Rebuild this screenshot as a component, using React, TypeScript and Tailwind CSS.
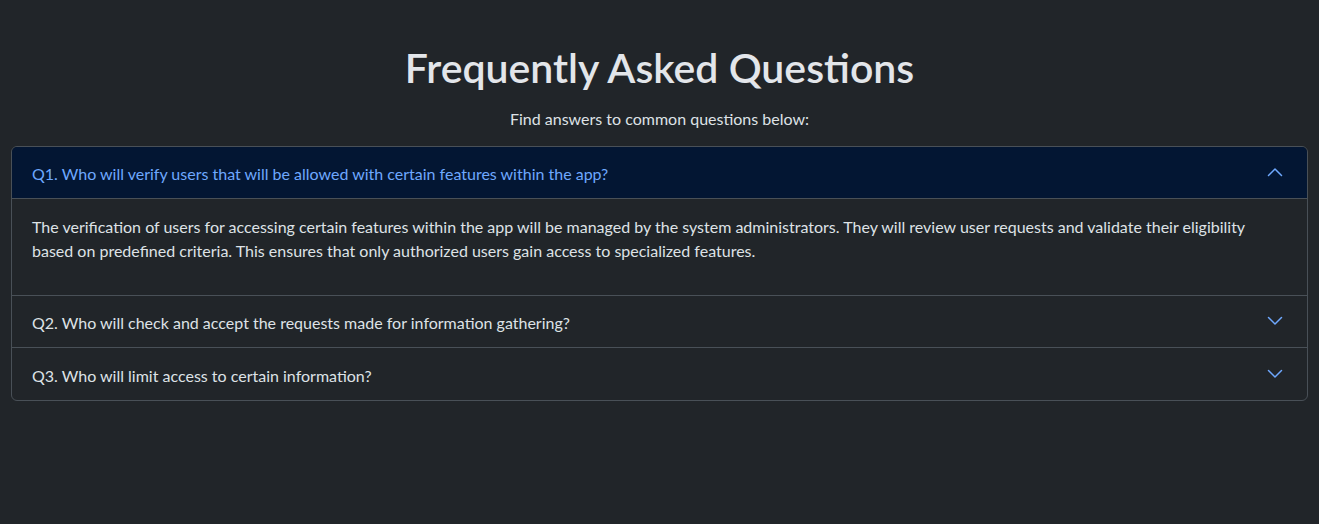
const faqs = [
  {
    q: "Q1. Who will verify users that will be allowed with certain features within the app?",
    a: "The verification of users for accessing certain features within the app will be managed by the system administrators. They will review user requests and validate their eligibility based on predefined criteria. This ensures that only authorized users gain access to specialized features.",
    open: true,
  },
  {
    q: "Q2. Who will check and accept the requests made for information gathering?",
    a: "",
    open: false,
  },
  {
    q: "Q3. Who will limit access to certain information?",
    a: "",
    open: false,
  },
]

function Chevron({ up }: { up: boolean }) {
  return (
    <svg
      viewBox="0 0 16 16"
      className={up ? "w-4 h-4 rotate-180 shrink-0" : "w-4 h-4 shrink-0"}
      fill="none"
      stroke="#6ea8fe"
      strokeWidth="1.5"
      strokeLinecap="round"
      strokeLinejoin="round"
    >
      <path d="M1.5 4.5L8 11L14.5 4.5" />
    </svg>
  )
}

export default function App() {
  return (
    <div
      className="min-h-[524px] bg-[#212529] text-[#dee2e6] px-[11px]"
      style={{ fontFamily: "Lato, 'Open Sans', sans-serif" }}
    >
      {/* Heading */}
      <h1 className="pt-[44px] text-center text-[41px] leading-[48px] font-semibold text-[#e3e6ea]">
        Frequently Asked Questions
      </h1>
      <p className="mt-[15px] mb-[15px] text-center text-base leading-6">
        Find answers to common questions below:
      </p>

      {/* Accordion */}
      <div className="border border-[#495057] rounded-md overflow-hidden">
        {faqs.map((item, i) => (
          <div key={i} className={i > 0 ? "border-t border-[#495057]" : ""}>
            <button
              className={`w-full flex items-center justify-between pl-5 pr-6 text-left text-base leading-6 h-[51.5px] ${
                item.open
                  ? "bg-[#031633] text-[#6ea8fe] border-b border-[#495057]"
                  : "text-[#dee2e6]"
              }`}
            >
              <span className="pt-[4px]">{item.q}</span>
              <Chevron up={item.open} />
            </button>
            {item.open && (
              <div className="px-5 pt-4 pb-4">
                <p className="mb-4 text-base leading-6 text-[#dee2e6]">{item.a}</p>
              </div>
            )}
          </div>
        ))}
      </div>
    </div>
  )
}
